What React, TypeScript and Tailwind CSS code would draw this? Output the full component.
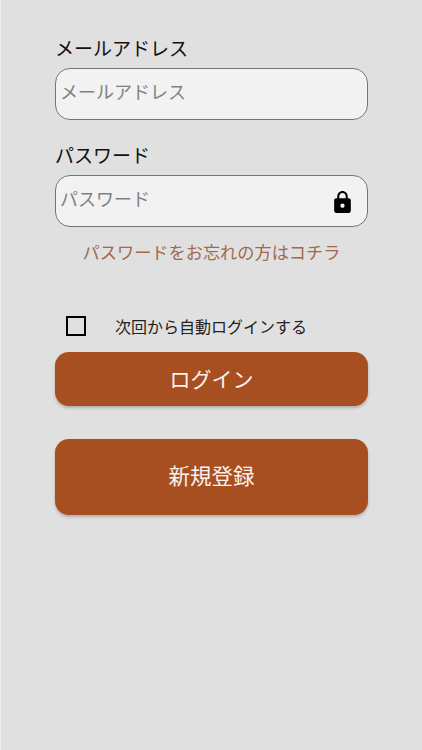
const font = { fontFamily: '"Noto Sans CJK JP", sans-serif' };

function Lock() {
  return (
    <svg width="25" height="25" viewBox="0 0 24 24" fill="black" className="shrink-0">
      <path d="M18 8h-1V6c0-2.76-2.24-5-5-5S7 3.24 7 6v2H6c-1.1 0-2 .9-2 2v10c0 1.1.9 2 2 2h12c1.1 0 2-.9 2-2V10c0-1.1-.9-2-2-2zm-6 9c-1.1 0-2-.9-2-2s.9-2 2-2 2 .9 2 2-.9 2-2 2zm3.1-9H8.9V6c0-1.71 1.39-3.1 3.1-3.1 1.71 0 3.1 1.39 3.1 3.1v2z" />
    </svg>
  );
}

export default function App() {
  return (
    <div style={font} className="h-[750px] w-[422px] overflow-hidden bg-[#e0e0e0] border-l border-l-[#ebebeb] pl-[54px] pr-[54px] pt-[34px]">
      <div className="text-[19px] leading-[28px] text-[#111] whitespace-nowrap">メールアドレス</div>
      <div className="mt-[6px] h-[52px] rounded-[15px] border-[1.5px] border-[#757575] bg-[#f2f2f2] flex items-center pl-[4px] pb-[5px] text-[18px] text-[#808080] whitespace-nowrap">
        メールアドレス
      </div>
      <div className="mt-[21px] text-[19px] leading-[28px] text-[#111] whitespace-nowrap">パスワード</div>
      <div className="mt-[6px] h-[52px] rounded-[15px] border-[1.5px] border-[#757575] bg-[#f2f2f2] flex items-center justify-between pl-[4px] pr-[12px] text-[18px] text-[#808080] whitespace-nowrap">
        <span className="mb-[5px]">パスワード</span>
        <span className="mt-[3px]"><Lock /></span>
      </div>
      <div className="mt-[12px] text-center text-[17.2px] leading-[26px] text-[#a2694d] whitespace-nowrap">パスワードをお忘れの方はコチラ</div>
      <div className="mt-[47px] flex items-center h-[28px] pl-[11px]">
        <span className="w-[20px] h-[20px] border-[2.5px] border-black shrink-0" />
        <span className="ml-[29px] text-[16px] text-[#222] whitespace-nowrap">次回から自動ログインする</span>
      </div>
      <div className="mt-[12px] h-[54px] rounded-[14px] bg-[#a84f21] shadow-[0_2px_3px_rgba(0,0,0,0.22)] flex items-center justify-center text-[21px] text-[#f8f3ee]">
        ログイン
      </div>
      <div className="mt-[33px] h-[76px] rounded-[14px] bg-[#a84f21] shadow-[0_2px_3px_rgba(0,0,0,0.22)] flex items-center justify-center pb-[3px] text-[21.5px] text-[#f8f3ee]">
        新規登録
      </div>
    </div>
  );
}
